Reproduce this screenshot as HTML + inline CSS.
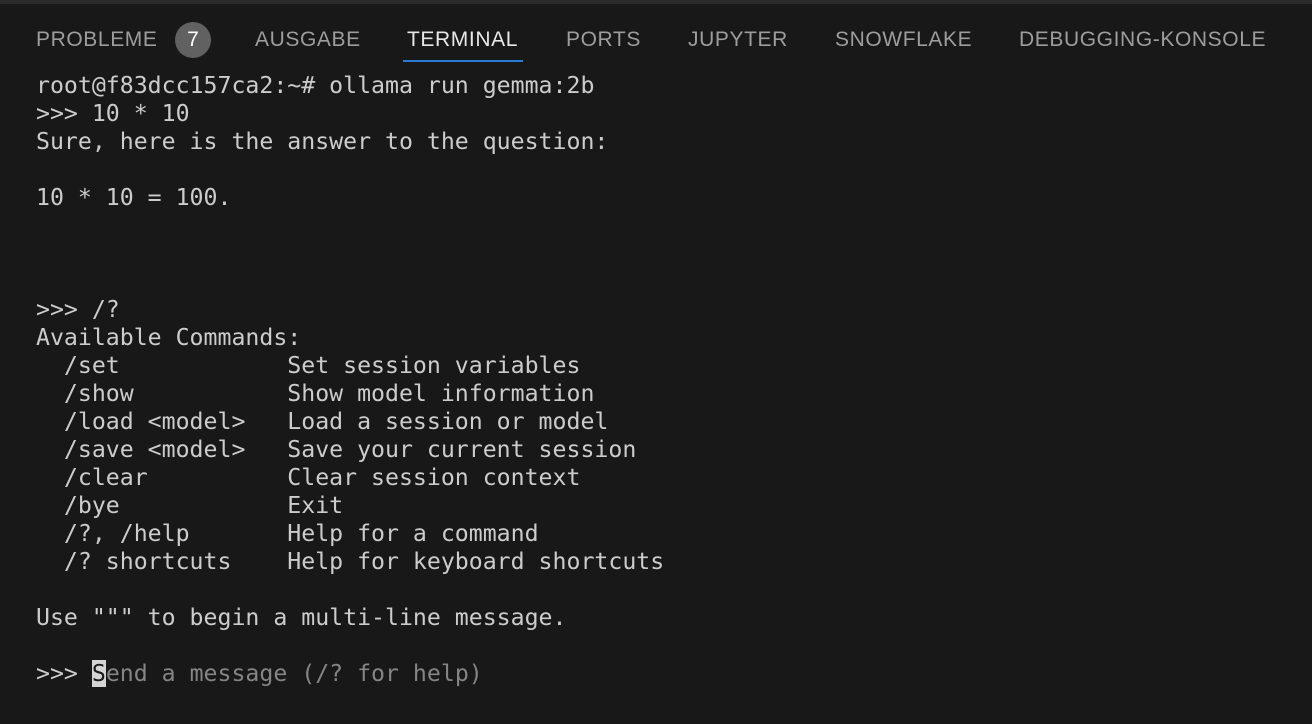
<!DOCTYPE html>
<html><head><meta charset="utf-8"><style>
html,body{margin:0;padding:0;width:1312px;height:724px;background:#181818;overflow:hidden;}
.topline{position:absolute;left:0;top:0;width:1312px;height:4px;background:#2b2b2b;}
.tab{position:absolute;top:26px;font-family:"Liberation Sans",sans-serif;font-size:21px;color:#9d9d9d;letter-spacing:0.6px;white-space:nowrap;line-height:28px;}
.active{color:#e7e7e7;}
.ul{position:absolute;left:403px;top:60px;width:120px;height:2px;background:#2b7bd6;}
.badge{position:absolute;left:175px;top:22px;width:36px;height:36px;border-radius:18px;background:#616161;color:#fff;font-family:"Liberation Sans",sans-serif;font-size:21px;text-align:center;line-height:36px;}
pre{position:absolute;left:36px;top:72px;margin:0;font-family:"DejaVu Sans Mono","Liberation Mono",monospace;font-size:23.2px;line-height:28px;color:#cccccc;letter-spacing:0px;}
.dim{color:#858585;}
.cur{background:#d4d4d4;color:#181818;}
</style></head><body>
<div class="topline"></div>
<div class="tab" style="left:36px">PROBLEME</div>
<div class="badge">7</div>
<div class="tab" style="left:255px">AUSGABE</div>
<div class="tab active" style="left:407px">TERMINAL</div>
<div class="ul"></div>
<div class="tab" style="left:566px">PORTS</div>
<div class="tab" style="left:688px">JUPYTER</div>
<div class="tab" style="left:835px">SNOWFLAKE</div>
<div class="tab" style="left:1019px">DEBUGGING-KONSOLE</div>
<pre>root@f83dcc157ca2:~# ollama run gemma:2b
&gt;&gt;&gt; 10 * 10
Sure, here is the answer to the question:

10 * 10 = 100.



&gt;&gt;&gt; /?
Available Commands:
  /set            Set session variables
  /show           Show model information
  /load &lt;model&gt;   Load a session or model
  /save &lt;model&gt;   Save your current session
  /clear          Clear session context
  /bye            Exit
  /?, /help       Help for a command
  /? shortcuts    Help for keyboard shortcuts

Use """ to begin a multi-line message.

&gt;&gt;&gt; <span class="cur">S</span><span class="dim">end a message (/? for help)</span></pre>
</body></html>
